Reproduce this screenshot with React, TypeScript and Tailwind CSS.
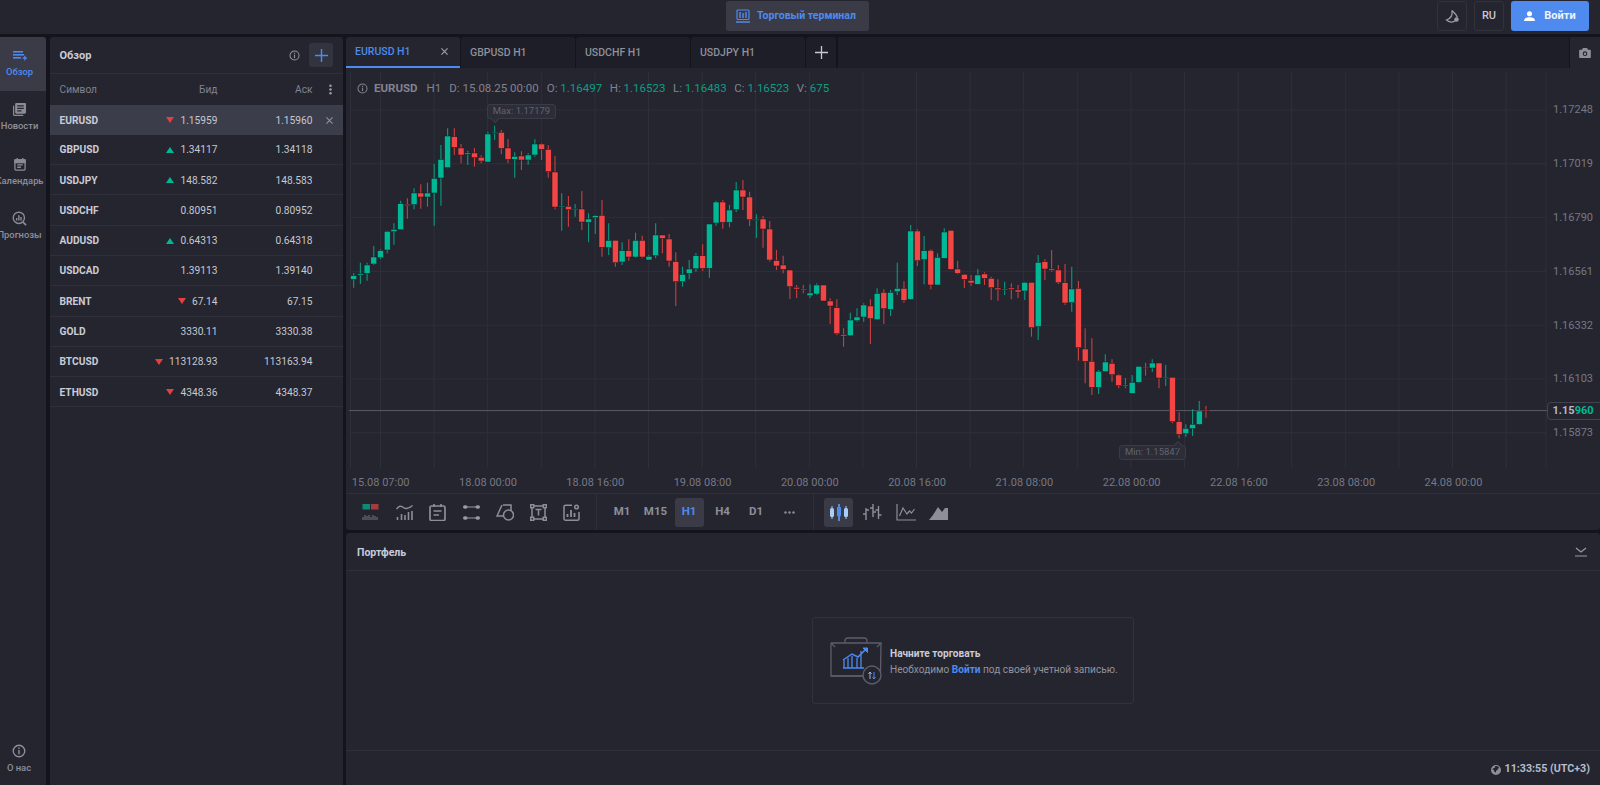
import React from "react";

const G = "#00b896";
const R = "#f44545";

type C = [string, number, number, number, number];
const z6: C[] = [
  ["g",490,533,497,508],["g",458,522,491,495],["g",458,512,465,490],["g",408,465,441,462],["g",418,447,422,443],["g",362,430,364,420],["g",340,404,358,365],["g",272,360,281,359],["r",265,326,283,287],["g",235,298,249,284],
  ["r",223,296,249,261],["g",218,290,249,261],["g",162,347,205,249],["g",105,287,148,204],["g",55,175,78,173],["r",55,135,80,112],["r",102,160,114,135],["g",122,165,129,133],["r",114,170,129,143],["r",136,160,142,153],
  ["g",65,157,72,156],["g",47,90,67,70],["r",60,133,67,115],["r",87,160,114,148],["g",127,203,139,148],["r",124,180,138,150],["g",130,164,135,150],["g",88,140,102,135],["r",100,150,102,118],["r",106,203,118,185],
  ["r",138,298,186,291],["g",250,362,288,291],["r",258,350,289,299],["g",282,320,296,299],["r",243,360,297,336],["g",310,397,327,337],["g",315,372,317,323],["r",270,440,316,412],["g",340,435,391,413],["r",390,470,391,458],
  ["g",397,465,422,456],["r",388,452,422,441],["g",368,443,391,441],["r",377,445,391,441],["g",436,450,439,450],["g",340,445,375,437],["r",375,430,375,385],["r",372,470,387,453],["r",427,588,455,515],["g",470,530,493,515],
  ["g",450,508,477,490],["g",430,485,437,476],["r",403,483,437,475],["g",342,503,342,475],["g",272,347,276,339],["r",270,356,276,337],["g",285,352,300,337],["g",216,306,240,299],["r",210,300,240,261],["r",245,348,261,329],
  ["g",313,384,328,331],
];
const z7: C[] = [
  ["r",138,233,147,177],["r",153,275,177,270],["r",240,300,272,288],["r",257,310,285,298],["r",300,387,300,350],["r",345,384,352,357],["r",345,370,357,360],["g",343,384,369,377],["g",340,375,345,372],["r",345,393,345,393],
  ["r",385,462,393,408],["r",388,495,413,491],["r",475,530,494,498],["g",428,498,450,497],["g",415,455,441,452],["g",400,455,405,441],["r",388,522,408,446],["g",355,450,370,449],["r",358,462,367,416],["g",360,438,367,418],
  ["g",278,375,355,365],["r",334,398,355,391],["g",165,390,183,388],["r",178,288,183,272],["g",198,343,242,269],["r",238,358,241,345],["g",250,345,262,345],["g",175,265,186,265],["r",180,300,181,298],["r",272,313,297,310],
  ["r",312,354,313,328],["r",315,348,331,339],["g",297,343,315,343],["r",307,345,312,325],["r",320,390,325,353],["r",328,392,354,359],["g",335,375,357,360],["r",340,388,354,358],["r",345,384,360,366],["g",336,390,337,363],
  ["r",337,500,337,473],["g",255,510,277,470],["r",268,330,275,297],["r",240,305,297,301],["r",285,342,300,338],["r",282,405,338,399],["g",290,425,357,398],["r",333,572,355,533],["r",475,640,537,574],["r",505,675,574,652],
  ["g",600,672,604,652],["g",553,605,576,605],["r",568,635,580,614],["r",612,655,615,647],["g",624,655,645,648],["g",615,670,637,670],["g",588,640,589,637],["r",578,617,592,595],["g",568,606,579,594],["r",578,655,579,624],
  ["g",585,648,622,625],["r",622,760,622,755],
];
const z8: C[] = [
  ["r",127,205,155,193],["g",163,200,175,191],["g",118,198,163,176],["g",93,165,123,163],["r",108,143,120,123],
];
const candles = [
  ...z6.map(([c, a, b, d, e]) => [c, 110 + a / 3, 110 + b / 3, 110 + d / 3, 110 + e / 3] as const),
  ...z7.map(([c, a, b, d, e]) => [c, 170 + a / 3, 170 + b / 3, 170 + d / 3, 170 + e / 3] as const),
  ...z8.map(([c, a, b, d, e]) => [c, 370 + a / 3, 370 + b / 3, 370 + d / 3, 370 + e / 3] as const),
];

const vGrid = [350.5, ...Array.from({ length: 22 }, (_, i) => 380.5 + 53.6 * i)];
const hGrid = [110, 163.8, 217.6, 271.4, 325.2, 379, 432.8];
const prices = ["1.17248", "1.17019", "1.16790", "1.16561", "1.16332", "1.16103", "1.15873"];
const times = ["15.08 07:00","18.08 00:00","18.08 16:00","19.08 08:00","20.08 00:00","20.08 16:00","21.08 08:00","22.08 00:00","22.08 16:00","23.08 08:00","24.08 00:00"];

function Chart() {
  return (
    <svg viewBox="346 68 1254 425" width={1254} height={425} className="block absolute left-0 top-0">
      {vGrid.map((x) => (
        <line key={x} x1={x} x2={x} y1={72} y2={468} stroke="#2e2f3a" strokeWidth={1} />
      ))}
      {hGrid.map((y) => (
        <line key={y} x1={350} x2={1546} y1={y} y2={y} stroke="#2e2f3a" strokeWidth={1} />
      ))}
      <line x1={1546} x2={1546} y1={72} y2={468} stroke="#2e2f3a" />
      <line x1={349} x2={1547} y1={410.6} y2={410.6} stroke="#5b5c67" strokeWidth={1} />
      {candles.map(([c, wt, wb, bt, bb], i) => {
        const x = 353.67 + i * 6.711;
        const col = c === "g" ? G : R;
        return (
          <g key={i}>
            <line x1={x} x2={x} y1={wt} y2={wb} stroke={col} strokeOpacity={0.8} strokeWidth={1.1} />
            <rect x={x - 3} y={bt} width={6} height={Math.max(bb - bt, 1)} fill={col} stroke="#191a22" strokeWidth={0.5} />
          </g>
        );
      })}
      {prices.map((p, i) => (
        <text key={p} x={1553} y={hGrid[i] + 3.3} fontSize={11} fill="#777883">{p}</text>
      ))}
      {times.map((t, i) => (
        <text key={t} x={351.8 + 107.28 * i} y={485.5} fontSize={11} fill="#777883">{t}</text>
      ))}
    </svg>
  );
}

function Callout({ text, up, cls, arrow }: { text: string; up?: boolean; cls: string; arrow: string }) {
  return (
    <div className={`absolute h-[15px] flex items-center justify-center rounded-[3px] border border-[#3a3b46] bg-[#2c2d38] text-[9.5px] text-[#62636e] ${cls}`}>
      {text}
      <span className={`absolute ${arrow} w-[6px] h-[6px] rotate-45 bg-[#2c2d38] ${up ? "-top-[4px] border-l border-t" : "-bottom-[4px] border-r border-b"} border-[#3a3b46]`} />
    </div>
  );
}

function Info({ className = "" }: { className?: string }) {
  return (
    <svg viewBox="0 0 16 16" className={className} fill="none" stroke="currentColor">
      <circle cx="8" cy="8" r="6.6" strokeWidth="1.5" />
      <rect x="7.2" y="6.8" width="1.6" height="5" fill="currentColor" stroke="none" />
      <rect x="7.2" y="4" width="1.6" height="1.7" fill="currentColor" stroke="none" />
    </svg>
  );
}

const IconWatch = () => (
  <svg viewBox="0 0 14 10" className="w-[14px] h-[10px]" fill="#4d8bf0">
    <rect x="0" y="0" width="10" height="1.6" /><rect x="0" y="3" width="11" height="1.6" /><rect x="0" y="6" width="8" height="1.6" />
    <rect x="9.6" y="6.4" width="4.4" height="1.3" /><rect x="11.2" y="4.8" width="1.3" height="4.6" />
  </svg>
);
const IconNews = () => (
  <svg viewBox="0 0 14 14" className="w-[13px] h-[13px]" fill="#8a8b97">
    <path d="M0 3h1.3v9.7H11V14H1.3C.6 14 0 13.4 0 12.7V3z" />
    <path fillRule="evenodd" d="M3.6 0h9.1c.7 0 1.3.6 1.3 1.3v8.900c0 .7-.6 1.3-1.3 1.3H3.6c-.7 0-1.3-.6-1.3-1.3V1.3C2.3 .6 2.9 0 3.6 0zM4.6 2.5v1.3h7V2.5zM4.6 5.2v1.3h7V5.200zM4.6 7.9v1.3h4.600V7.900z" />
  </svg>
);
const IconCal = () => (
  <svg viewBox="0 0 13 14" className="w-[12px] h-[13px]" fill="none" stroke="#8a8b97" strokeWidth="1.4">
    <rect x="1" y="2" width="11" height="11" rx="1" />
    <path d="M3.5 0v3M9.5 0v3" />
    <rect x="1" y="2" width="11" height="3" fill="#8a8b97" />
    <path d="M3.5 7.500h6M3.5 10h4" />
  </svg>
);
const IconForecast = () => (
  <svg viewBox="0 0 16 16" className="w-[15px] h-[15px]" fill="none" stroke="#8a8b97" strokeWidth="1.5">
    <circle cx="7.3" cy="7.3" r="6" />
    <path d="M11.5 11.5L15 15" strokeWidth="1.8" />
    <path d="M5 10V7.500M7.300 10V4.500M9.600 10V6.500" />
  </svg>
);

function NavItem({ icon, label, active }: { icon: React.ReactNode; label: string; active?: boolean }) {
  return (
    <div className={`h-[54.4px] w-[46px] rounded-tr-[3px] ${active ? "bg-[#3a3b47]" : ""}`}>
      <div className="w-[39px] pt-[11px] flex flex-col items-center gap-[3px]">
        <div className="h-[15px] flex items-center justify-center">{icon}</div>
        <span className={`whitespace-nowrap text-[9.4px] leading-[12px] font-medium ${active ? "text-[#4d8bf0]" : "text-[#8f909c]"}`}>{label}</span>
      </div>
    </div>
  );
}

const rows: [string, "u" | "d" | "", string, string][] = [
  ["EURUSD", "d", "1.15959", "1.15960"],
  ["GBPUSD", "u", "1.34117", "1.34118"],
  ["USDJPY", "u", "148.582", "148.583"],
  ["USDCHF", "", "0.80951", "0.80952"],
  ["AUDUSD", "u", "0.64313", "0.64318"],
  ["USDCAD", "", "1.39113", "1.39140"],
  ["BRENT", "d", "67.14", "67.15"],
  ["GOLD", "", "3330.11", "3330.38"],
  ["BTCUSD", "d", "113128.93", "113163.94"],
  ["ETHUSD", "d", "4348.36", "4348.37"],
];

function Tri({ dir }: { dir: "u" | "d" }) {
  return (
    <svg viewBox="0 0 8 6" className="w-[8px] h-[6px] mr-[6px]">
      <path d={dir === "u" ? "M4 0L8 6H0z" : "M0 0H8L4 6z"} fill={dir === "u" ? G : "#e5403f"} />
    </svg>
  );
}

function Tab({ label, active }: { label: string; active?: boolean }) {
  return (
    <div className={`w-[113.5px] h-[31px] flex items-center justify-between pl-[9px] pr-[12px] rounded-t-[3px] text-[10.5px] font-medium ${active ? "bg-[#24252f] text-[#4d8bf0] border-b-2 border-[#4d8bf0]" : "bg-[#1d1e27] text-[#8f909c]"}`}>
      <span>{label}</span>
      {active && (
        <svg viewBox="0 0 8 8" className="w-[7px] h-[7px]" stroke="#9a9ba6" strokeWidth="1.4"><path d="M.5.5l7 7M7.5.5l-7 7" /></svg>
      )}
    </div>
  );
}

const s = { fill: "none", stroke: "#8d8e9a", strokeWidth: 1.5 };
const box = "w-[17px] h-[17px]";
const tools: React.ReactNode[] = [
  <svg key="a" viewBox="0 0 17 17" className={box}>
    <rect x="0.500" y="0" width="7.500" height="5.500" fill="#0d8a73" /><rect x="9" y="0" width="7.500" height="5.500" fill="#a63a3d" />
    <path d="M1 16v-3M3 16v-5M5 16v-4M7 16v-5M9 16v-3M11 16v-5M13 16v-4M15 16v-3" stroke="#6f707b" strokeWidth="1.100" />
  </svg>,
  <svg key="b" viewBox="0 0 17 17" className={box} {...s}>
    <path d="M.5 5c2.500-3.500 4.500-3.500 7-1.500s5 1.500 9-2" />
    <path d="M1.500 16v-3M5.500 16v-6M9 16v-5M12.500 16V8M16 16V7" strokeWidth="1.600" />
  </svg>,
  <svg key="c" viewBox="0 0 17 17" className={box} {...s}>
    <rect x="1" y="2" width="15" height="14.500" rx="1.500" strokeWidth="1.700" />
    <path d="M5 0v3M12 0v3M4.500 7h8M4.500 11h5.500" strokeWidth="1.700" />
  </svg>,
  <svg key="d" viewBox="0 0 17 17" className={box} fill="none">
    <path d="M2 3h13M2 14h13" stroke="#70717c" strokeWidth="1.500" />
    <rect x="0" y="1.200" width="4.500" height="3.600" rx="1.800" fill="#9a9ba6" /><rect x="12.500" y="1.200" width="4.500" height="3.600" rx="1.800" fill="#9a9ba6" />
    <rect x="0" y="12.200" width="4.500" height="3.600" rx="1.800" fill="#9a9ba6" /><rect x="12.500" y="12.200" width="4.500" height="3.600" rx="1.800" fill="#9a9ba6" />
  </svg>,
  <svg key="e" viewBox="0 0 18 17" className="w-[18px] h-[17px]" {...s}>
    <path d="M7 1h8v6M6 1L1 12h7" />
    <circle cx="12.500" cy="11" r="5" />
  </svg>,
  <svg key="f" viewBox="0 0 17 17" className={box} {...s}>
    <rect x="2" y="2" width="13" height="13" />
    <rect x=".7" y=".7" width="3" height="3" fill="#24252f" /><rect x="13.300" y=".7" width="3" height="3" fill="#24252f" />
    <rect x=".7" y="13.300" width="3" height="3" fill="#24252f" /><rect x="13.300" y="13.300" width="3" height="3" fill="#24252f" />
    <path d="M5.500 5.500h6M8.500 5.500v6" />
  </svg>,
  <svg key="g" viewBox="0 0 17 17" className={box} {...s}>
    <path d="M9 1.200H2.500A1.500 1.500 0 0 0 1 2.700v12a1.500 1.500 0 0 0 1.500 1.500h12a1.500 1.500 0 0 0 1.500-1.500V8" strokeWidth="1.500" />
    <path d="M4.500 13v-3M8 13V6M11.500 13V9" strokeWidth="1.800" />
    <circle cx="13.500" cy="3" r="1.800" />
  </svg>,
];
const chartTypes: React.ReactNode[] = [
  <svg key="a" viewBox="0 0 20 17" className="w-[20px] h-[17px]">
    <path d="M3 2v13M10 0v17M17 2v13" stroke="#a8cdf8" strokeWidth="1" />
    <path d="M10 0v17" stroke="#4d8bf0" strokeWidth="1" />
    <rect x="1" y="4" width="4" height="9" rx="1.500" fill="#a8cdf8" /><rect x="8" y="2.500" width="4" height="10" rx="1.500" fill="#4d8bf0" /><rect x="15" y="4" width="4" height="9" rx="1.500" fill="#a8cdf8" />
  </svg>,
  <svg key="b" viewBox="0 0 20 17" className="w-[20px] h-[17px]" {...s}>
    <path d="M4 4v12M1 10h3M4 6h3M11 0v13M8 4h3M11 8h3M16.500 2v13M13.500 6h3M16.500 11h3" strokeWidth="1.400" />
  </svg>,
  <svg key="c" viewBox="0 0 20 17" className="w-[20px] h-[17px]" {...s}>
    <path d="M1 0v16h19" strokeWidth="1.200" />
    <path d="M3.500 12l3.500-8 4 6 2.500-3 2 2 3-4" strokeWidth="1.200" />
  </svg>,
  <svg key="d" viewBox="0 0 20 17" className="w-[20px] h-[17px]">
    <path d="M0 16l4-5 5-8 4 5 3-4 3 0v12z" fill="#8d8e9a" />
  </svg>,
];

export default function App() {
  return (
    <div className="w-[1600px] h-[785px] overflow-hidden flex flex-col gap-[3px] bg-[#14151c] font-['Roboto',sans-serif]">
      {/* Header */}
      <header className="h-[34px] shrink-0 bg-[#24252f] relative flex items-start justify-end pt-[1px] pr-[11px] gap-[7px]">
        <div className="absolute left-[726px] top-[1px] w-[143px] h-[30px] rounded-[3px] bg-[#3a3b47] flex items-center pl-[10px] gap-[7px]">
          <svg viewBox="0 0 14 14" className="w-[14px] h-[14px]" fill="none" stroke="#4d8bf0" strokeWidth="1.200">
            <rect x="1" y="1" width="12" height="9.500" rx="1" />
            <path d="M0 13h14" strokeWidth="1.500" />
            <path d="M4 3v6M7 4v5M10 3v6" strokeWidth="1.500" />
          </svg>
          <span className="text-[10.5px] font-bold text-[#4d8bf0] whitespace-nowrap">Торговый терминал</span>
        </div>
        <div className="w-[30px] h-[30px] rounded-[3px] border border-[#31323c] flex items-center justify-center">
          <svg viewBox="0 0 15 15" className="w-[15px] h-[15px]" fill="none" stroke="#9a9ba6" strokeWidth="1.300">
            <path d="M7 1.500c.6 4-1 8-5.500 9.500 2.500 2.500 6.500 2.800 9 .5" />
            <path d="M7 1.500c2 1.800 4.500 4.500 5.500 7" />
            <circle cx="11.500" cy="10.500" r="2.200" fill="#9a9ba6" stroke="none" />
          </svg>
        </div>
        <div className="w-[30px] h-[30px] rounded-[3px] border border-[#31323c] flex items-center justify-center text-[11px] font-medium text-[#c6c8d2]">RU</div>
        <div className="w-[78px] h-[30px] rounded-[3px] bg-[#4f8aef] flex items-center justify-center gap-[9px]">
          <svg viewBox="0 0 12 11" className="w-[11px] h-[10px]" fill="#fff"><circle cx="6" cy="3" r="2.800" /><path d="M0 11c0-3 2.500-4 6-4s6 1 6 4z" /></svg>
          <span className="text-[11px] font-bold text-[#f0f3fa]">Войти</span>
        </div>
      </header>

      <div className="flex-1 flex min-h-0">
        {/* Nav */}
        <nav className="w-[46px] shrink-0 bg-[#24252f] flex flex-col rounded-tr-[3px]">
          <NavItem active icon={<IconWatch />} label="Обзор" />
          <NavItem icon={<IconNews />} label="Новости" />
          <NavItem icon={<IconCal />} label="Календарь" />
          <NavItem icon={<IconForecast />} label="Прогнозы" />
          <div className="mt-auto h-[41px] w-[38px] flex flex-col items-center gap-[3px] text-[#8f909c]">
            <Info className="w-[14px] h-[14px]" />
            <span className="text-[9.4px] font-medium">О нас</span>
          </div>
        </nav>

        {/* Watchlist */}
        <aside className="ml-[3.5px] w-[293.5px] shrink-0 bg-[#24252f] rounded-t-[3px] text-[10.2px]">
          <div className="h-[37px] flex items-center border-b border-[#2e2f3a] pl-[10px] pr-[10px]">
            <span className="text-[11px] font-bold text-[#c9cbd6] pt-[2px]">Обзор</span>
            <Info className="ml-auto w-[11px] h-[11px] text-[#8f909c]" />
            <div className="ml-[9px] w-[24px] h-[24px] rounded-[3px] bg-[#31333f] flex items-center justify-center">
              <svg viewBox="0 0 14 14" className="w-[13px] h-[13px]" stroke="#4d8bf0" strokeWidth="1.600"><path d="M7 0v14M0 7h14" /></svg>
            </div>
          </div>
          <div className="h-[30.5px] flex items-center pl-[10px] text-[#82838f]">
            <span className="w-[80px]">Символ</span>
            <span className="w-[78px] text-right">Бид</span>
            <span className="w-[95px] text-right">Аск</span>
            <svg viewBox="0 0 4 14" className="ml-[16px] w-[3px] h-[11px]" fill="#9a9ba6"><circle cx="2" cy="2" r="1.700" /><circle cx="2" cy="7" r="1.700" /><circle cx="2" cy="12" r="1.700" /></svg>
          </div>
          {rows.map(([sym, dir, bid, ask], i) => (
            <div key={sym} className={`h-[30.3px] flex items-center pl-[10px] pt-[1px] ${i === 0 ? "bg-[#3c3d4a]" : "border-b border-[#2e2f3a]"}`}>
              <span className="w-[60px] font-bold text-[#c9cbd6]">{sym}</span>
              <span className="w-[98px] flex items-center justify-end text-[#c6c8d2]">
                {dir && <Tri dir={dir} />}
                {bid}
              </span>
              <span className="w-[95px] text-right text-[#c6c8d2]">{ask}</span>
              {i === 0 && (
                <svg viewBox="0 0 8 8" className="ml-[13px] w-[7px] h-[7px]" stroke="#8f909c" strokeWidth="1.300"><path d="M.5.5l7 7M7.5.5l-7 7" /></svg>
              )}
            </div>
          ))}
        </aside>

        {/* Main */}
        <main className="ml-[3px] flex-1 min-w-0 flex flex-col gap-[3px]">
          <div>
            <div className="h-[31px] flex gap-[1.5px] bg-[#14151c]">
              <Tab active label="EURUSD H1" />
              <Tab label="GBPUSD H1" />
              <Tab label="USDCHF H1" />
              <Tab label="USDJPY H1" />
              <div className="w-[30px] bg-[#1d1e27] rounded-t-[3px] flex items-center justify-center">
                <svg viewBox="0 0 14 14" className="w-[13px] h-[13px]" stroke="#c6c8d2" strokeWidth="1.400"><path d="M7 0v14M0 7h14" /></svg>
              </div>
              <div className="w-[731px] bg-[#1d1e27]" />
              <div className="flex-1 bg-[#24252f] flex items-center justify-center">
                <svg viewBox="0 0 14 12" className="w-[12px] h-[10px]" fill="#8f909c"><path fillRule="evenodd" d="M4.5 0h5l1 2H13c.6 0 1 .4 1 1v8c0 .6-.4 1-1 1H1c-.6 0-1-.4-1-1V3c0-.6.4-1 1-1h2.500zM7 4a2.800 2.800 0 1 0 0 5.600A2.800 2.800 0 0 0 7 4zm0 1.300a1.500 1.500 0 1 1 0 3 1.500 1.500 0 0 1 0-3z" /></svg>
              </div>
            </div>
            <section className="bg-[#24252f] rounded-b-[3px]">
              <div className="relative h-[425px]">
                <Chart />
                <div className="absolute left-[11px] top-[12px] flex items-center whitespace-nowrap text-[11.5px] text-[#82838f]">
                  <Info className="w-[11px] h-[11px] mr-[6px]" />
                  <span className="font-bold mr-[9px]">EURUSD</span>
                  <span className="mr-[8px]">H1</span>
                  <span className="mr-[8px]">D: 15.08.25 00:00</span>
                  {[["O:", "1.16497"], ["H:", "1.16523"], ["L:", "1.16483"], ["C:", "1.16523"], ["V:", "675"]].map(([k, v]) => (
                    <span key={k} className="mr-[7.6px]">{k} <span className="text-[#0b9f84]">{v}</span></span>
                  ))}
                </div>
                <Callout text="Max: 1.17179" cls="left-[141px] top-[36px] w-[69px]" arrow="left-[4px]" />
                <Callout up text="Min: 1.15847" cls="left-[773px] top-[377px] w-[67px]" arrow="right-[4px]" />
                <div className="absolute left-[1200.5px] top-[334px] w-[56px] h-[18px] rounded-l-[4px] border border-[#42434f] bg-[#24252f] pl-[5px] flex items-center text-[11px] font-bold text-[#b6b7c2]">
                  1.15<span className="text-[#00b896]">960</span>
                </div>
              </div>
              <div className="h-[37px] border-t border-[#2e2f3a] flex items-center">
                <div className="w-[251px] flex items-center pl-[8px] h-full border-r border-[#2e2f3a]">
                  {tools.map((t, i) => (
                    <div key={i} className="w-[33.5px] h-full flex items-center justify-center">{t}</div>
                  ))}
                </div>
                <div className="w-[217px] flex items-center pl-[10.5px] h-full border-r border-[#2e2f3a] text-[11.5px] font-bold text-[#8d8e9a]">
                  {["M1", "M15", "H1", "H4", "D1"].map((t) => (
                    <div key={t} className={`w-[29px] h-[29px] mr-[4.5px] flex items-center justify-center rounded-[3px] ${t === "H1" ? "bg-[#3a3b47] text-[#4d8bf0]" : ""}`}>{t}</div>
                  ))}
                  <div className="w-[29px] h-[29px] flex items-center justify-center">
                    <svg viewBox="0 0 11 3" className="w-[11px] h-[3px]" fill="#8d8e9a"><circle cx="1.500" cy="1.500" r="1.200" /><circle cx="5.500" cy="1.500" r="1.200" /><circle cx="9.500" cy="1.500" r="1.200" /></svg>
                  </div>
                </div>
                <div className="flex items-center pl-[10px] gap-[4.5px]">
                  {chartTypes.map((c, i) => (
                    <div key={i} className={`w-[29px] h-[29px] flex items-center justify-center rounded-[3px] ${i === 0 ? "bg-[#3a3b47]" : ""}`}>{c}</div>
                  ))}
                </div>
              </div>
            </section>
          </div>

          <section className="flex-1 min-h-0 bg-[#24252f] rounded-t-[3px] flex flex-col">
            <div className="h-[38px] shrink-0 border-b border-[#2e2f3a] flex items-center justify-between pl-[11px] pr-[13px]">
              <span className="text-[10.5px] font-bold text-[#c9cbd6] pt-[2px]">Портфель</span>
              <svg viewBox="0 0 12 10" className="w-[12px] h-[10px]" fill="none" stroke="#9a9ba6" strokeWidth="1.200"><path d="M1 1l5 4 5-4M0 9h12" /></svg>
            </div>
            <div className="flex-1 flex items-center justify-center">
              <div className="w-[322px] h-[87px] rounded-[3px] border border-[#31323c] flex items-center pl-[17px]">
                <svg viewBox="0 0 52 48" className="w-[52px] h-[48px] shrink-0" fill="none">
                  <path d="M15 6V4a3 3 0 0 1 3-3h16a3 3 0 0 1 3 3v2" stroke="#5c5d69" strokeWidth="1.300" />
                  <path d="M1 6h50l-.5 30M1 6v33h32" stroke="#5c5d69" strokeWidth="1.300" />
                  <path d="M1 6l4 4M51 6l-4 4M1 39h32" stroke="#5c5d69" strokeWidth="1.300" />
                  <path d="M14 31V23M18 31V21M22 31V19M27 31V21M31 31V14" stroke="#4d8bf0" strokeWidth="1.300" />
                  <path d="M13 31h21" stroke="#4d8bf0" strokeWidth="1.500" />
                  <path d="M13 23l9-6 6 3 9-9" stroke="#4d8bf0" strokeWidth="1.500" />
                  <path d="M33 11h4.500v4.500z" fill="#4d8bf0" stroke="#4d8bf0" />
                  <circle cx="42" cy="38" r="9" fill="#24252f" stroke="#5c5d69" strokeWidth="1.400" />
                  <path d="M40 42v-7M38.500 37l1.500-2 1.500 2" stroke="#9ab6e8" strokeWidth="1" />
                  <path d="M44 35v7M42.500 40l1.500 2 1.500-2" stroke="#4d8bf0" strokeWidth="1" />
                </svg>
                <div className="ml-[8px] pt-[3px] flex flex-col gap-[4px]">
                  <span className="text-[10.1px] leading-[12px] font-bold text-[#c9cbd6]">Начните торговать</span>
                  <span className="text-[10.1px] leading-[12px] text-[#9293a0] whitespace-nowrap">
                    Необходимо <span className="font-bold text-[#4d8bf0]">Войти</span> под своей учетной записью.
                  </span>
                </div>
              </div>
            </div>
            <div className="h-[35px] shrink-0 border-t border-[#2e2f3a] flex items-center justify-end pr-[10px] pt-[3px] gap-[4px] text-[10.7px] font-bold text-[#b6bccb]">
              <svg viewBox="0 0 12 12" className="w-[10px] h-[10px]" fill="#8d8e9a"><path fillRule="evenodd" d="M6 0a6 6 0 1 1 0 12A6 6 0 0 1 6 0zM1.5 5l2 1 .5 2 2 1V7l2-1V4.500L10 3.500A4.600 4.600 0 0 0 4.500 1.500L5 3 3 4z" /></svg>
              11:33:55 (UTC+3)
            </div>
          </section>
        </main>
      </div>
    </div>
  );
}
